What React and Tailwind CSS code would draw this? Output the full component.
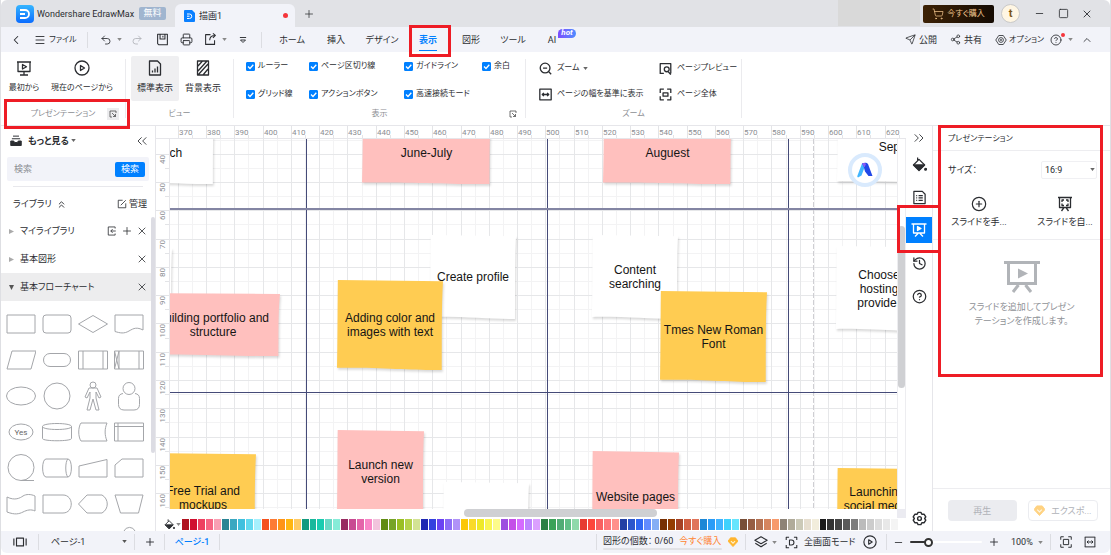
import { useLayoutEffect, useRef, useState } from "react";
import {
  ChevronLeft,
  ChevronUp,
  ChevronsLeft,
  ChevronsRight,
  ChevronsUp,
  CirclePlus,
  CircleQuestionMark,
  History,
  Menu,
  Minus,
  Plus,
  Printer,
  Redo2,
  Send,
  Share2,
  ShoppingCart,
  Square,
  Undo2,
  X
} from "lucide-react";

// Distance between two major grid lines, and where the first ones lie
const STEP = 28.27;
const FIRST_X = 8.3;
const FIRST_Y = 15.3;
const ticks = (size, start) => {
  const count = Math.max(0, Math.floor((size - start) / STEP) + 1);
  return Array.from({ length: count }, (_, i) => start + i * STEP);
};

const tabs = [
  { label: "ホーム", width: "w-11" },
  { label: "挿入", width: "w-11" },
  { label: "デザイン", width: "w-12" },
  { label: "表示", width: "w-11", active: true },
  { label: "図形", width: "w-[42px]" },
  { label: "ツール", width: "w-[42px]" },
  { label: "AI", width: "w-9", hot: true }
];

const viewOptions = [
  "ルーラー", "ページ区切り線", "ガイドライン", "余白",
  "グリッド線", "アクションボタン", "高速接続モード"
];

const palette = [
  "#b0121f", "#d00f2f", "#ee4060", "#f76583", "#f99fb3",
  "#2a8494", "#3aa8c1", "#3fc0de", "#62d9ef", "#a5f0fd",
  "#f4511e", "#fd7c35", "#ff9416", "#ffb612", "#ffca63",
  "#149a80", "#19b89c", "#1accb0", "#6ad9c6", "#86ecd8",
  "#982b61", "#c84a92", "#e464aa", "#f986c8", "#f2c3dd",
  "#618c12", "#77a427", "#9abf23", "#b5d24a", "#d3e394",
  "#1f28b3", "#3441df", "#6b43f3", "#8d6df7", "#b092f8",
  "#fbc707", "#f9da2a", "#eee929", "#f9f553", "#fdfb8a",
  "#9d4ee0", "#c44ee8", "#d56bff", "#be85ff", "#dba0ff",
  "#2c8044", "#3aa258", "#51ac75", "#62bf87", "#90d9ab",
  "#e73b32", "#fd463b", "#f95f60", "#fe7679", "#ff918b",
  "#2340a4", "#2b56cc", "#2f67f2", "#628bff", "#85aef5",
  "#773003", "#943c00", "#a64124", "#d15f41", "#e0745a",
  "#1c87d6", "#2a9cf7", "#40b3ff", "#3ed1fd", "#66e5fd",
  "#784f38", "#965d43", "#b37152", "#d5855f", "#f79a6c",
  "#8d8377", "#b0ab9a", "#cbc9b7", "#e6decf", "#f2eddc",
  "#1a1a1a", "#333333", "#444444", "#5a5a5a", "#7c7c7c",
  "#bbbbbb", "#cccccc", "#dddddd", "#e8e8e8", "#f4f4f4"
];

// Sticky notes in canvas coordinates
const PINK = "#ffc0be";
const YELLOW = "#ffcc52";
const notes = [
  { x: -53, y: -18, w: 97, h: 63, fill: "#fff", text: "March" },
  { x: 192, y: -18, w: 129, h: 63, fill: PINK, text: "June-July" },
  { x: 433, y: -18, w: 129, h: 63, fill: PINK, text: "Auguest" },
  { x: 667, y: -28, w: 142, h: 72, fill: "#fff", text: "September" },
  { x: -84, y: 108, w: 86, h: 84, fill: "#fff", text: "" },
  { x: -24, y: 154, w: 134, h: 63, fill: PINK, text: "Building portfolio and\nstructure" },
  { x: 260, y: 96, w: 86, h: 84, fill: "#fff", text: "Create profile" },
  { x: 167, y: 141, w: 106, h: 90, fill: YELLOW, text: "Adding color and\nimages with text" },
  { x: 422, y: 96, w: 86, h: 84, fill: "#fff", text: "Content\nsearching" },
  { x: 490, y: 152, w: 107, h: 91, fill: YELLOW, text: "Tmes New Roman\nFont" },
  { x: 666, y: 107, w: 86, h: 85, fill: "#fff", text: "Choose\nhosting\nprovider" },
  { x: -20, y: 314, w: 106, h: 90, fill: YELLOW, text: "Free Trial and\nmockups" },
  { x: 167, y: 291, w: 87, h: 84, fill: PINK, text: "Launch new\nversion" },
  { x: 273, y: 343, w: 86, h: 84, fill: "#fff", text: "" },
  { x: 422, y: 312, w: 87, h: 92, fill: PINK, text: "Website pages" },
  { x: 667, y: 329, w: 80, h: 61, fill: YELLOW, text: "Launching\nsocial media" }
];

// Flowchart library thumbnails, drawn in a 30x30 box
const shapes = [
  { name: "process", d: "M1 6h28v18H1z" },
  { name: "rounded", d: "M4 6h22a3 3 0 0 1 3 3v12a3 3 0 0 1-3 3H4a3 3 0 0 1-3-3V9a3 3 0 0 1 3-3z" },
  { name: "decision", d: "M15 6.500l14.500 8.500L15 23.500.500 15z" },
  { name: "document", d: "M1 6h28v15c-6-3-9-2-14 1s-9 2-14 .500z" },
  { name: "data", d: "M6 6h24l-5 18H1z" },
  { name: "terminator", d: "M8 8.500h14a6.500 6.500 0 0 1 0 13H8a6.500 6.500 0 0 1 0-13z" },
  { name: "predefined", d: "M.500 6h29v18H.500zM5 6v18M25 6v18" },
  { name: "crossed", d: "M.500 6h29v18H.500zM5 6v18M25 6v18M.500 6L5 24M5 6L.500 24" },
  { name: "ellipse", d: "M.500 15a14.500 9 0 1 0 29 0a14.500 9 0 1 0-29 0" },
  { name: "circle", d: "M2 15a13 13 0 1 0 26 0a13 13 0 1 0-26 0" },
  { name: "person", d: "M12 4a3 3 0 1 0 6 0a3 3 0 1 0-6 0M11 7h8l4 9-2 1-3-6v6l3 12h-3l-3-11-3 11H9l3-12v-6l-3 6-2-1z" },
  { name: "user", d: "M9 7.500a6 6 0 1 0 12 0a6 6 0 1 0-12 0M9 12.500c-3 .500-4.500 2-4.500 5v6c0 3.500 2 5.500 5.500 5.500h10c3.500 0 5.500-2 5.500-5.500v-6c0-3-1.500-4.500-4.500-5" },
  { name: "yes", d: "M3 15a12 8 0 1 0 24 0a12 8 0 1 0-24 0", text: "Yes" },
  { name: "database", d: "M.500 9.500c0-4 29-4 29 0v12c0 3-29 3-29 0zM.500 9.500c0 4 29 4 29 0" },
  { name: "stored", d: "M3 6h26c-2.500 6-2.500 12 0 18H3c-3-4-3-14 0-18z" },
  { name: "internal", d: "M.500 6h29v18H.500zM4 6v18M.500 9.500h29" },
  { name: "sequential", d: "M2 14.500a13 13 0 1 0 26 0a13 13 0 1 0-26 0M15 27.500h13" },
  { name: "direct", d: "M4 6h22c4.500 0 4.500 18 0 18H4C-.500 24-.500 6 4 6zM26 6c-3 2-3 16 0 18" },
  { name: "manual-input", d: "M1 13l28-6.500V24H1z" },
  { name: "card", d: "M8 6h21v18H1V12z" },
  { name: "tape", d: "M1 8c8 4 13 1 16-1s8-2 12 0v15c-4-2-8-1-12 1s-8 3-16 0z" },
  { name: "delay", d: "M1 6h20c11 0 11 18 0 18H1z" },
  { name: "display", d: "M9 6h15c7 4 7 14 0 18H9L.500 15z" },
  { name: "manual", d: "M1 6h28l-4.500 18h-18z" },
  { name: "blank-1", d: "" },
  { name: "blank-2", d: "" },
  { name: "blank-3", d: "" },
  { name: "connector", d: "M10 6a6 6 0 0 1 11 0" }
];

function useSize() {
  const ref = useRef(null);
  const [size, setSize] = useState({ width: 0, height: 0 });
  useLayoutEffect(() => {
    const measure = () => setSize({ width: ref.current.clientWidth, height: ref.current.clientHeight });
    measure();
    const observer = new ResizeObserver(measure);
    observer.observe(ref.current);
    return () => observer.disconnect();
  }, []);
  return [ref, size];
}

function Icon({ className = "size-4", width = 1.3, children }) {
  return <svg viewBox="0 0 16 16" className={`shrink-0 ${className}`} fill="none" stroke="currentColor" strokeWidth={width} strokeLinejoin="round" aria-hidden="true">
      {children}
    </svg>;
}

function Caret({ className = "" }) {
  return <svg viewBox="0 0 6 4" className={`w-[5px] h-[3px] shrink-0 ${className}`} aria-hidden="true">
      <path d="M0 0h6L3 4z" fill="currentColor" />
    </svg>;
}

function Highlight({ className }) {
  return <div className={`absolute z-20 border-3 border-[#ee1c25] pointer-events-none ${className}`} />;
}

function Divider({ className = "h-4" }) {
  return <div className={`w-px shrink-0 bg-[#dcdde2] ${className}`} />;
}

function IconButton({ label, className = "", children }) {
  return <button aria-label={label} className={`flex items-center justify-center shrink-0 ${className}`}>{children}</button>;
}

function Gem({ className }) {
  return <svg viewBox="0 0 12 12" className={`shrink-0 ${className}`} aria-hidden="true">
      <path d="M3 1h6l3 4-6 6.500L0 5z" fill="#ffb52e" stroke="#ffb52e" strokeLinejoin="round" />
      <path d="M3.500 5L6 7.500 8.500 5" fill="none" stroke="#fff3d0" strokeWidth="1.300" />
    </svg>;
}

function Bucket({ className }) {
  return <Icon className={className}>
      <path d="M6 .500v3M7.500 2.500l6 6-6 6-6-6z" />
      <path d="M2 8.500h11l-5.500 5.500z" fill="currentColor" />
      <circle cx="14.500" cy="13" r="1" fill="currentColor" />
    </Icon>;
}

function TitleBar() {
  return <div className="flex items-center h-[27px] bg-[#e1e2e6] rounded-t-md">
      <svg viewBox="0 0 18 18" className="size-[18px] ml-[15px] shrink-0" aria-hidden="true">
        <defs>
          <linearGradient id="brand" x1="0" y1="0" x2="0" y2="1">
            <stop offset="0" stopColor="#35b5ff" />
            <stop offset="1" stopColor="#0b6cff" />
          </linearGradient>
        </defs>
        <rect width="18" height="18" rx="4" fill="url(#brand)" />
        <path d="M4 5h5a4 4 0 0 1 0 8H4M4 9h5" fill="none" stroke="#fff" strokeWidth="1.800" />
      </svg>
      <span className="ml-[3px] w-[102px] whitespace-nowrap">Wondershare EdrawMax</span>
      <span className="w-[27px] h-[13px] leading-[13px] text-center rounded-xs bg-[#a0b5cf] text-white">無料</span>
      <div className="self-end flex items-center h-[23px] w-[120px] ml-[9px] px-[9px] rounded-t-md bg-[#f2f3f9]">
        <svg viewBox="0 0 11 12" className="w-[11px] h-3 mr-1" aria-hidden="true">
          <path d="M1 0h7l3 3v8a1 1 0 0 1-1 1H1a1 1 0 0 1-1-1V1a1 1 0 0 1 1-1z" fill="#0b80ff" />
          <path d="M3 4h2.500a2.200 2.200 0 0 1 0 4.500H3M3 6.200h2.500" fill="none" stroke="#fff" />
        </svg>
        <span>描画1</span>
        <span className="ml-auto mr-[-2px] size-[5px] rounded-full bg-[#f5353b]" />
      </div>
      <IconButton label="新規タブ" className="w-7"><Plus className="size-3" strokeWidth={1.500} /></IconButton>
      <div className="ml-auto w-[82px] h-[26px] self-start bg-[#d9d9d9]" />
      <button className="ml-[3px] w-[71px] h-[18px] flex items-center justify-center gap-[3px] rounded-xs bg-linear-to-r from-[#3d2206] to-[#150b02] text-[8px] text-[#f0c48c] whitespace-nowrap">
        <ShoppingCart className="size-3" strokeWidth={1.500} />
        <span>今すぐ購入</span>
      </button>
      <button className="ml-[7px] size-[19px] rounded-full border border-[#c9c9c9] bg-[#fff6e3] text-[11px] font-bold text-[#7a5416] leading-[16px]">t</button>
      <IconButton label="最小化" className="ml-[7px] w-6"><Minus className="size-[11px]" strokeWidth={1.800} /></IconButton>
      <IconButton label="最大化" className="w-6"><Square className="size-[11px]" strokeWidth={1.800} /></IconButton>
      <IconButton label="閉じる" className="w-6 mr-[11px]"><X className="size-3" strokeWidth={1.800} /></IconButton>
    </div>;
}

function MenuBar() {
  return <div className="flex items-center h-[25px] bg-[#f2f3f9]">
      <IconButton label="戻る" className="ml-[7px] w-4"><ChevronLeft className="size-[14px]" strokeWidth={1.800} /></IconButton>
      <button className="flex items-center gap-[3px] ml-[10px] w-[53px] text-[8px] whitespace-nowrap">
        <Menu className="size-3 shrink-0" strokeWidth={1.800} />ファイル
      </button>
      <Divider />
      <IconButton label="元に戻す" className="ml-3 w-3"><Undo2 className="size-3" strokeWidth={1.700} /></IconButton>
      <Caret className="ml-[5px] text-[#888]" />
      <IconButton label="やり直し" className="ml-[9px] w-3 text-[#b0b2b8]"><Redo2 className="size-3" strokeWidth={1.700} /></IconButton>
      <IconButton label="保存" className="ml-3 w-[14px]">
        <Icon className="size-[13px]"><path d="M2 1.500h12v13H3.500L2 13zM5 1.500v6h6v-6M8.500 3.500v2" /></Icon>
      </IconButton>
      <IconButton label="印刷" className="ml-[10px] w-[14px]"><Printer className="size-[13px]" strokeWidth={1.700} /></IconButton>
      <IconButton label="エクスポート" className="ml-[10px] w-[14px]">
        <Icon className="size-[13px]"><path d="M8 2H2v12h11V9M7 9c0-4 3-6 7-6M11 .500L14 3l-3 3" /></Icon>
      </IconButton>
      <Caret className="ml-[5px] text-[#888]" />
      <IconButton label="クイックアクセス" className="ml-[11px] w-[10px]">
        <Icon className="size-[10px]" width={1.500}><path d="M3 4h10M4 8h8l-4 4z" /></Icon>
      </IconButton>
      <Divider className="h-4 ml-[13px] mr-2" />
      <nav className="flex items-center h-full" role="tablist">
        {tabs.map((tab) => <button key={tab.label} role="tab" aria-selected={Boolean(tab.active)} className={`relative h-full whitespace-nowrap ${tab.width} ${tab.active ? "font-bold text-[#0080ff]" : ""}`}>
            {tab.label}
            {tab.active && <span className="absolute bottom-[1px] left-[13px] right-[13px] h-px bg-[#0080ff]" />}
            {tab.active && <Highlight className="left-[3px] -top-[2px] w-[42px] h-8" />}
            {tab.hot && <span className="absolute left-6 top-[2px] w-[18px] h-[9px] rounded-t-md rounded-br-md bg-linear-to-r from-[#7a4bff] to-[#4a8cff] text-white italic font-bold text-[8px] leading-[8px]">hot</span>}
          </button>)}
      </nav>
      <div className="ml-auto flex items-center whitespace-nowrap">
        <button className="flex items-center gap-[3px] w-[45px]"><Send className="size-[11px]" strokeWidth={1.700} />公開</button>
        <button className="flex items-center gap-[3px] w-[45px]"><Share2 className="size-[11px]" strokeWidth={1.700} />共有</button>
        <button className="flex items-center gap-[2px] w-[55px] text-[8px]">
          <Icon className="size-3" width={1.100}><path d="M5 2h6l4 6-4 6H5L1 8z" /><circle cx="8" cy="8" r="3.200" /><circle cx="8" cy="8" r=".800" /></Icon>
          オプション
        </button>
        <IconButton label="ヘルプ" className="relative w-3">
          <CircleQuestionMark className="size-3" strokeWidth={1.700} />
          <span className="absolute -right-[3px] -top-[1px] size-1 rounded-full bg-[#f5353b]" />
        </IconButton>
        <Caret className="ml-[6px] text-[#888]" />
        <IconButton label="リボンを閉じる" className="ml-2 mr-[17px] w-3"><ChevronUp className="size-3" strokeWidth={1.700} /></IconButton>
      </div>
    </div>;
}

function Launcher({ className = "" }) {
  return <IconButton label="詳細" className={`size-3 ${className}`}>
      <Icon className="size-2" width={1.500}><path d="M6 14H2V2h12v4M6 6l7 7M13 8v5H8" /></Icon>
    </IconButton>;
}

function RibbonGroup({ label, className, launcher, children }) {
  return <section className={`relative shrink-0 text-[8px] ${className}`}>
      <div className="h-[55px]">{children}</div>
      <div className="flex items-center justify-center h-[14px] text-[#8c8e93]">
        <h2>{label}</h2>
        {launcher}
      </div>
    </section>;
}

function LargeButton({ label, className, children }) {
  return <button className={`flex flex-col items-center h-[45px] mt-1 pt-1 gap-[5px] rounded-xs whitespace-nowrap ${className}`}>
      {children}
      <span>{label}</span>
    </button>;
}

function Ribbon() {
  const line = <div className="w-px my-[7px] shrink-0 bg-[#ebebee]" />;
  return <div className="flex h-[74px] bg-white border-b border-[#e6e6ea]">
      <RibbonGroup label="プレゼンテーション" className="w-[124px]" launcher={<Launcher className="absolute right-[6px] bg-[#ececee] text-[#444]" />}>
        <div className="flex">
          <LargeButton label="最初から" className="w-[46px]">
            <Icon><path d="M1 2h14M2 2v9.500h12V2M8 11.500V15M4 15h8M6.500 4.500v4.500L10.500 6.700z" /></Icon>
          </LargeButton>
          <LargeButton label="現在のページから" className="w-[70px]">
            <Icon><circle cx="8" cy="8" r="7" /><path d="M6.500 5.500v5l4-2.500z" /></Icon>
          </LargeButton>
        </div>
        <Highlight className="left-[3px] top-[47px] w-[126px] h-[30px]" />
      </RibbonGroup>
      {line}
      <RibbonGroup label="ビュー" className="w-[107px]">
        <div className="flex pl-[5px] text-[9px]">
          <LargeButton label="標準表示" className="w-12 bg-[#efeff1]">
            <Icon><path d="M2.500 1h8l3 3v11h-11zM5.500 12.500v-2M8 12.500v-4M10.500 12.500v-6" /></Icon>
          </LargeButton>
          <LargeButton label="背景表示" className="w-12">
            <Icon><path d="M2.500 1h11v14h-11zM3 6l4.500-5M3 11l9-10M3 15l10-11M8 15l5-6" /></Icon>
          </LargeButton>
        </div>
      </RibbonGroup>
      {line}
      <RibbonGroup label="表示" className="w-[291px]" launcher={<Launcher className="absolute right-[6px] text-[#444]" />}>
        <div className="grid grid-cols-[63px_95px_78px_auto] pl-3">
          {viewOptions.map((option) => <label key={option} className="flex items-center h-7 gap-[3px] whitespace-nowrap">
              <span className="relative size-[9px] shrink-0">
                <input type="checkbox" defaultChecked className="block appearance-none size-[9px] rounded-[1px] border border-[#0080ff] checked:bg-[#0080ff]" />
                <svg viewBox="0 0 9 9" className="absolute inset-0 pointer-events-none" aria-hidden="true">
                  <path d="M2 4.500L4 6.500 7.300 2.800" fill="none" stroke="#fff" strokeWidth="1.300" />
                </svg>
              </span>
              {option}
            </label>)}
        </div>
      </RibbonGroup>
      {line}
      <RibbonGroup label="ズーム" className="w-[215px]">
        <div className="grid grid-cols-[120px_auto] pt-[3px] pl-[13px] whitespace-nowrap">
          <button className="flex items-center gap-[5px] h-[26px]">
            <Icon className="size-[13px]" width={1.600}><circle cx="7.500" cy="7.500" r="6" /><path d="M5 7.500h5M12 12l3 3" /></Icon>
            <span>ズーム</span><Caret className="-ml-[2px] text-[#666]" />
          </button>
          <button className="flex items-center gap-[5px] h-[26px]">
            <Icon className="size-[13px]" width={1.600}><path d="M6 14H1.500V2h13v12M14.500 15.500L11.500 12" /><circle cx="9.500" cy="9" r="3" /></Icon>
            ページプレビュー
          </button>
          <button className="flex items-center gap-[5px] h-[26px]">
            <Icon className="size-[13px]" width={1.600}><path d="M1 1.500h14v13H1zM4 8h8M6 6L4 8l2 2M10 6l2 2-2 2" /></Icon>
            ページの幅を基準に表示
          </button>
          <button className="flex items-center gap-[5px] h-[26px]">
            <Icon className="size-[13px]" width={1.600}><path d="M6 1.500H1.500V6M10 1.500h4.500V6M6 14.500H1.500V10M10 14.500h4.500V10M5 6h6v4H5z" /></Icon>
            ページ全体
          </button>
        </div>
      </RibbonGroup>
      {line}
    </div>;
}

function LibraryRow({ label, open, actions }) {
  return <div className={`flex items-center h-7 pl-2 pr-1 ${open ? "bg-[#ededee]" : ""}`}>
      <button className="flex items-center gap-[6px] flex-1 whitespace-nowrap">
        <svg viewBox="0 0 6 6" className={`size-[5px] ${open ? "text-[#555]" : "text-[#aaa]"}`} aria-hidden="true">
          <path d={open ? "M0 0h6L3 6z" : "M0 0v6l6-3z"} fill="currentColor" />
        </svg>
        {label}
      </button>
      {actions}
      <IconButton label="閉じる" className="w-[10px]"><X className="size-3 shrink-0" strokeWidth={1.600} /></IconButton>
    </div>;
}

function LibraryPanel() {
  return <aside className="flex flex-col w-[155px] shrink-0 border-r border-[#e6e6ea] overflow-hidden">
      <div className="flex items-center h-[29px] shrink-0 pl-[9px] pr-[7px] whitespace-nowrap">
        <Icon className="size-3 mr-[6px]"><path d="M4 1.500h8M2.500 5h11" /><path d="M1 8h4l1 2h4l1-2h4v6H1z" fill="currentColor" /></Icon>
        <h2 className="font-bold">もっと見る</h2>
        <Caret className="ml-[2px] text-[#666]" />
        <IconButton label="パネルを閉じる" className="ml-auto w-3"><ChevronsLeft className="size-4 shrink-0" strokeWidth={1.300} /></IconButton>
      </div>
      <div className="flex items-center h-6 shrink-0 mx-[6px] mt-[2px] pl-[7px] pr-1 rounded-xs bg-[#f2f3f9]">
        <input type="search" aria-label="検索" placeholder="検索" className="flex-1 min-w-0 bg-transparent outline-none placeholder:text-[#8c8e93]" />
        <button className="w-[30px] h-[15px] rounded-xs bg-[#0080ff] text-white leading-[15px]">検索</button>
      </div>
      <div className="h-px shrink-0 mx-3 mt-[5px] bg-[#e8e8ec]" />
      <div className="flex items-center h-[30px] shrink-0 pl-3 pr-2 pt-1 whitespace-nowrap">
        ライブラリ
        <ChevronsUp className="size-[11px] ml-1" strokeWidth={2} />
        <button className="ml-auto flex items-center gap-[2px]">
          <Icon className="size-[10px]"><path d="M9 2H2v12h12V7M6 10l8-8" /></Icon>
          管理
        </button>
      </div>
      <div className="flex flex-1 min-h-0">
        <div className="flex-1 min-w-0 overflow-hidden">
          <LibraryRow label="マイライブラリ" actions={<>
              <IconButton label="インポート" className="w-[10px] mr-[5px]">
                <Icon className="size-[10px]"><path d="M13 4V1.500H2v13h11V12M14 8H6M9 5L6 8l3 3" /></Icon>
              </IconButton>
              <IconButton label="追加" className="w-[10px] mr-[5px]"><Plus className="size-3 shrink-0" strokeWidth={1.600} /></IconButton>
            </>} />
          <LibraryRow label="基本図形" />
          <LibraryRow label="基本フローチャート" open />
          <div className="grid grid-cols-[repeat(4,36px)] auto-rows-[36px] pl-[2px] pt-[5px]">
            {shapes.map((shape) => <div key={shape.name} className="flex items-center justify-center">
                <svg viewBox="0 0 30 30" className="size-[30px]" fill="none" stroke="#a4a6aa" strokeWidth="1" aria-hidden="true">
                  <path d={shape.d} />
                  {shape.text && <text x="15" y="18" textAnchor="middle" fontSize="8" fill="#666" stroke="none">{shape.text}</text>}
                </svg>
              </div>)}
          </div>
        </div>
        <div className="w-1"><div className="h-[236px] rounded-full bg-[#dcdce3]" /></div>
      </div>
    </aside>;
}

function Note({ note }) {
  return <div className="absolute flex items-center justify-center text-center whitespace-pre" style={{ left: note.x, top: note.y, width: note.w, height: note.h }}>
      <svg viewBox="0 0 100 100" preserveAspectRatio="none" className="absolute inset-0 size-full overflow-visible drop-shadow-[1px_2px_1px_rgba(0,0,0,0.15)]" aria-hidden="true">
        <path d="M.800 0L100 1.500C98.500 30 99 70 98.800 100C70 100.500 45 97 0 97.500C.500 70 .500 30 .800 0z" fill={note.fill} />
      </svg>
      <span className="relative">{note.text}</span>
    </div>;
}

function Canvas({ width, height, canvasRef }) {
  return <div ref={canvasRef} className="relative flex-1 min-w-0 overflow-hidden bg-white font-['Liberation_Sans',sans-serif] text-[12px] leading-[14px] text-[#151515]">
      <svg className="absolute inset-0 size-full" shapeRendering="crispEdges" aria-hidden="true">
        {ticks(width, FIRST_X - STEP).map((p) => <path key={p} d={`M${Math.floor(p + STEP / 2)}.500 0v${height}`} stroke="#f3f3f4" />)}
        {ticks(height, FIRST_Y - STEP).map((p) => <path key={p} d={`M0 ${Math.floor(p + STEP / 2)}.500h${width}`} stroke="#f3f3f4" />)}
        {ticks(width, FIRST_X).map((p) => <path key={p} d={`M${Math.floor(p)}.500 0v${height}`} stroke="#e6e7e9" />)}
        {ticks(height, FIRST_Y).map((p) => <path key={p} d={`M0 ${Math.floor(p)}.500h${width}`} stroke="#e6e7e9" />)}
        <path d={`M643.500 0v${height}`} stroke="#cfcfd3" strokeDasharray="5 2" />
        <path d={`M136.500 0v${height}M377.500 0v${height}M618.500 0v${height}M0 253.500h${width}`} stroke="#454b78" />
        <path d={`M0 70h${width}`} stroke="#8385a3" strokeWidth="2" />
      </svg>
      {notes.map((note) => <Note key={`${note.x}-${note.y}`} note={note} />)}
      <button aria-label="AIアシスタント" className="absolute left-[678px] top-[14px] size-[34px] flex items-center justify-center rounded-full border-4 border-[#d9eafd] bg-white">
        <svg viewBox="0 0 16 16" className="size-4" aria-hidden="true">
          <path d="M5 1.500h4L4.500 13.500 1 15.500c-.800-.500-.800-1-.500-2z" fill="#41b5ff" />
          <path d="M5 1.500C7 .500 10 .500 11 2l4.500 12h-4L8 9.500 6.500 4z" fill="#2148e8" />
          <path d="M5 1.500C7 .700 8.500 1 9 2L7.500 5.500z" fill="#8a5cf5" />
        </svg>
      </button>
    </div>;
}

function Workspace() {
  const [canvasRef, { width, height }] = useSize();
  return <main className="flex-1 min-w-0 flex flex-col">
      <div className="h-[13px] shrink-0 pl-[14px] border-b border-[#e6e6ea]">
        <svg className="w-full h-3" fontSize="8" fill="#8c8e93" aria-hidden="true">
          {ticks(width, FIRST_X).map((p, i) => <g key={p}>
              <path d={`M${Math.floor(p)}.500 0v12M${Math.floor(p + STEP / 2)}.500 9v3`} stroke="#e3e4e7" />
              <text x={Math.floor(p) + 1} y="9">{370 + i * 10}</text>
            </g>)}
        </svg>
      </div>
      <div className="flex flex-1 min-h-0">
        <div className="w-[14px] shrink-0 border-r border-[#e6e6ea] overflow-hidden">
          <svg className="w-[13px] h-full" fontSize="8" fill="#8c8e93" aria-hidden="true">
            {ticks(height, FIRST_Y).map((p, i) => <g key={p}>
                <path d={`M0 ${Math.floor(p)}.500h13M9 ${Math.floor(p + STEP / 2)}.500h4`} stroke="#e3e4e7" />
                <text textAnchor="end" transform={`translate(9 ${Math.floor(p) + 1}) rotate(-90)`}>{40 + i * 10}</text>
              </g>)}
          </svg>
        </div>
        <Canvas width={width} height={height} canvasRef={canvasRef} />
        <div className="w-[9px] shrink-0 border-x border-[#ededf0] pt-[87px]">
          <div className="h-[162px] rounded-full bg-[#cfd0d3]" />
        </div>
      </div>
      <div className="flex h-[9px] shrink-0 pl-[308px]">
        <div className="w-[193px] h-2 rounded-full bg-[#cfd0d3]" />
        <div className="ml-auto w-[9px] bg-[#ebebf1]" />
      </div>
      <div className="flex items-center h-[13px] shrink-0 px-2">
        <button aria-label="塗りつぶし" className="flex items-center w-[18px] gap-[1px] shrink-0"><Bucket className="size-[11px]" /><Caret className="text-[#888]" /></button>
        <div className="flex flex-1 gap-px">
          {palette.map((color) => <button key={color} aria-label={color} className="flex-1 h-[11px]" style={{ backgroundColor: color }} />)}
        </div>
      </div>
    </main>;
}

function SideStrip() {
  return <div className="flex flex-col items-center w-[27px] shrink-0 border-r border-[#e6e6ea]">
      <IconButton label="パネルを閉じる" className="h-6 w-[26px]"><ChevronsRight className="size-4" strokeWidth={1.300} /></IconButton>
      <div className="flex flex-col gap-[7px] mt-[1px]">
        <IconButton label="塗りつぶし" className="size-[26px]"><Bucket className="size-[15px]" /></IconButton>
        <IconButton label="ページ設定" className="size-[26px]">
          <Icon className="size-[15px]"><path d="M2 1.500h9l3 3v10H2zM4.500 6h1M7 6h4.500M4.500 8.500h1M7 8.500h4.500M4.500 11h1M7 11h4.500" /></Icon>
        </IconButton>
        <div className="relative">
          <IconButton label="プレゼンテーション" className="size-[26px] bg-[#0080ff] text-white">
            <Icon className="size-4"><path d="M.500 2h15M2.500 2v9h11V2M4 14.500l3-3M12 14.500l-3-3" /><path d="M6.500 4.500v4l3.500-2z" fill="currentColor" /></Icon>
          </IconButton>
          <Highlight className="-left-[9px] -top-3 w-11 h-12" />
        </div>
        <IconButton label="履歴" className="size-[26px]"><History className="size-[15px]" strokeWidth={2} /></IconButton>
        <IconButton label="ヘルプ" className="size-[26px]"><CircleQuestionMark className="size-[15px]" strokeWidth={2} /></IconButton>
      </div>
      <IconButton label="設定" className="mt-auto size-[26px]">
        <Icon className="size-[15px]" width={1.500}><path d="M6.500 1.500h3l1 2 2.500 0 1.700 2.700-1.200 1.800 1.200 1.800L13 12.500h-2.500l-1 2h-3l-1-2H3L1.300 9.800 2.500 8 1.300 6.200 3 3.500h2.500z" /><circle cx="8" cy="8" r="2" /></Icon>
      </IconButton>
    </div>;
}

function PresentationPanel() {
  return <aside className="relative flex flex-col w-[177px] shrink-0">
      <h2 className="h-[25px] shrink-0 pl-[15px] text-[8px] leading-[25px] border-b border-[#ededf0]">プレゼンテーション</h2>
      <div className="flex items-center justify-between h-9 shrink-0 pl-[15px] pr-[13px] pt-[1px]">
        <label htmlFor="slide-size">サイズ：</label>
        <div className="relative">
          <select id="slide-size" className="appearance-none w-14 h-[18px] pl-[3px] rounded-xs border border-[#f0f0f3] bg-white">
            <option>16:9</option>
            <option>4:3</option>
          </select>
          <Caret className="absolute right-[2px] top-[7px] text-[#666] pointer-events-none" />
        </div>
      </div>
      <div className="flex h-[53px] shrink-0 pt-[9px] pl-[3px] border-b border-[#ededf0] whitespace-nowrap">
        <button className="flex flex-col items-center gap-[3px] w-[86px]">
          <CirclePlus className="size-4" strokeWidth={1.800} />スライドを手...
        </button>
        <button className="flex flex-col items-center gap-[3px] w-[86px]">
          <Icon><path d="M1 1.500h14M2.500 1.500v10h11v-10M4.500 15l2.500-3.500M11.500 15L9 11.500M5 6V4h2M9 4h2v2M11 7.500v2H9M7 9.500H5v-2" /></Icon>
          スライドを自...
        </button>
      </div>
      <div className="flex flex-col items-center pt-[21px] text-center text-[#8f9297]">
        <svg viewBox="0 0 36 32" className="w-9 h-8 text-[#b1b4b8]" aria-hidden="true">
          <path d="M0 1.500h36M4.500 2v20.500h27V2M9 31l5.500-7M27 31l-5.500-7" fill="none" stroke="currentColor" strokeWidth="3" />
          <path d="M14 7.500v10l10-5z" fill="currentColor" />
        </svg>
        <p className="mt-[7px]">スライドを追加してプレゼン<br />テーションを作成します。</p>
      </div>
      <div className="mt-auto flex gap-[11px] h-[43px] shrink-0 pt-[11px] pl-[15px] pr-3 border-t border-[#ededf0]">
        <button className="flex-1 h-[21px] rounded-sm bg-[#ebecf0] text-[#b0b2b8]">再生</button>
        <button className="flex-1 h-[21px] flex items-center justify-center gap-[6px] rounded-sm border border-[#ebecf0] text-[#b0b2b8] whitespace-nowrap">
          <Gem className="size-[11px] opacity-60" />エクスポ...
        </button>
      </div>
      <Highlight className="left-[5px] right-[7px] -top-[1px] h-[252px]" />
    </aside>;
}

function StatusBar() {
  const [zoom, setZoom] = useState(23);
  return <footer className="flex items-center h-[22px] shrink-0 bg-[#f2f3f9] rounded-b-md whitespace-nowrap">
      <IconButton label="ページ一覧" className="w-9 ml-[1px]">
        <Icon className="size-[14px]"><path d="M1 4v8M15 4v8M4 3.500h8v9H4z" /></Icon>
      </IconButton>
      <Divider />
      <div className="relative">
        <select aria-label="ページ" className="appearance-none w-[95px] h-5 pl-3 bg-transparent">
          <option>ページ-1</option>
        </select>
        <Caret className="absolute right-[7px] top-2 text-[#555] pointer-events-none" />
      </div>
      <Divider />
      <IconButton label="ページを追加" className="w-[29px]"><Plus className="size-3" strokeWidth={1.800} /></IconButton>
      <Divider />
      <button className="w-[54px] font-medium text-[#0080ff]">ページ-1</button>
      <Divider />
      <div className="ml-auto flex items-center">
        <Divider />
        <div className="ml-[6px] w-[124px]">
          <div className="flex items-center gap-[6px]"><span>図形の個数： 0/60</span><a href="#buy" className="text-[#ff8534]">今すぐ購入</a></div>
          <div className="w-[119px] h-[2px] rounded-full bg-[#e1e2e6]" />
        </div>
        <Gem className="size-[10px] ml-[1px]" />
        <Divider className="h-4 ml-[7px]" />
        <button aria-label="レイヤー" className="flex items-center gap-1 ml-2 w-[27px]">
          <Icon className="size-[14px]"><path d="M8 2l7 4-7 4-7-4zM1.500 9.500L8 13.500l6.500-4" /></Icon>
          <Caret className="text-[#888]" />
        </button>
        <button className="flex items-center gap-[6px] ml-1 w-[76px]">
          <Icon className="size-[13px]"><path d="M5 1.500H1.500V5M11 1.500h3.500V5M5 14.500H1.500V11M11 14.500h3.500V11M5.500 5H8a3 3 0 0 1 0 6H5.500z" /></Icon>
          全画面モード
        </button>
        <IconButton label="再生" className="w-[14px] ml-[2px]">
          <Icon className="size-[14px]"><circle cx="8" cy="8" r="7" /><path d="M6.500 5.500v5l4-2.500z" /></Icon>
        </IconButton>
        <Divider className="h-4 ml-[9px]" />
        <IconButton label="縮小" className="w-[23px]"><Minus className="size-[11px]" strokeWidth={1.800} /></IconButton>
        <input
          type="range"
          aria-label="ズーム"
          value={zoom}
          onChange={(e) => setZoom(Number(e.target.value))}
          className="appearance-none w-[72px] h-[2px] rounded-full [&::-webkit-slider-thumb]:appearance-none [&::-webkit-slider-thumb]:size-[9px] [&::-webkit-slider-thumb]:rounded-full [&::-webkit-slider-thumb]:border-2 [&::-webkit-slider-thumb]:border-[#333] [&::-webkit-slider-thumb]:bg-white"
          style={{ background: `linear-gradient(to right, #333 ${zoom}%, #fff ${zoom}%)` }}
        />
        <IconButton label="拡大" className="w-6"><Plus className="size-3" strokeWidth={1.800} /></IconButton>
        <button className="flex items-center gap-[5px] ml-[5px] w-[39px]">100%<Caret className="text-[#888]" /></button>
        <Divider />
        <IconButton label="ページ全体" className="w-[29px]">
          <Icon className="size-3"><path d="M5 1H1v4M11 1h4v4M5 15H1v-4M11 15h4v-4M4.500 4.500h7v7h-7z" /></Icon>
        </IconButton>
        <IconButton label="ページ幅" className="w-5 mr-[10px]">
          <Icon className="size-3"><path d="M1 1.500h14M1 14.500h14M1.500 1.500v13M14.500 1.500v13M4 8h8M6 6L4 8l2 2M10 6l2 2-2 2" /></Icon>
        </IconButton>
      </div>
    </footer>;
}

export default function App() {
  return <div lang="ja" className="flex flex-col h-screen pb-[2px] border-x border-[#dedfe3] bg-white text-[9px] leading-[14px] text-[#2b2d31] font-[Roboto,'Noto_Sans_CJK_JP',sans-serif] [font-feature-settings:'palt'] overflow-hidden">
      <TitleBar />
      <MenuBar />
      <Ribbon />
      <div className="flex flex-1 min-h-0">
        <LibraryPanel />
        <Workspace />
        <SideStrip />
        <PresentationPanel />
      </div>
      <StatusBar />
    </div>;
}
